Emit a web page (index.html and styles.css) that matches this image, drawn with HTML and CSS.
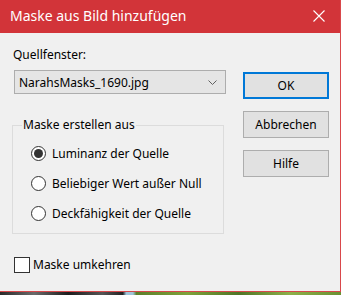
FILE: index.html
```html
<!DOCTYPE html>
<html lang="de">
<head>
    <meta charset="UTF-8">
    <title>Maske aus Bild hinzufügen</title>
    <link rel="stylesheet" href="styles.css">
</head>
<body>
    <div class="dialog">
        <div class="title-bar">
            <span class="title-text">Maske aus Bild hinzufügen</span>
            <svg class="close-icon" width="12" height="12" viewBox="0 0 12 12">
                <path d="M0.5 0.5 L11.5 11.5 M11.5 0.5 L0.5 11.5" stroke="#ffffff" stroke-width="1.1" fill="none"/>
            </svg>
        </div>

        <div class="dialog-body">
            <div class="main-column">
                <div class="field-label">Quellfenster:</div>
                <div class="combo">
                    <span class="combo-value">NarahsMasks_1690.jpg</span>
                    <svg class="combo-arrow" width="9" height="5" viewBox="0 0 9 5">
                        <path d="M0.5 0.5 L4.5 4.5 L8.5 0.5" stroke="#606060" stroke-width="1" fill="none"/>
                    </svg>
                </div>

                <fieldset class="group-box">
                    <legend class="group-title">Maske erstellen aus</legend>
                    <div class="radio-row">
                        <span class="radio checked"></span>
                        <span>Luminanz der Quelle</span>
                    </div>
                    <div class="radio-row">
                        <span class="radio"></span>
                        <span>Beliebiger Wert außer Null</span>
                    </div>
                    <div class="radio-row">
                        <span class="radio"></span>
                        <span>Deckfähigkeit der Quelle</span>
                    </div>
                </fieldset>

                <div class="check-row">
                    <span class="checkbox"></span>
                    <span>Maske umkehren</span>
                </div>
            </div>

            <div class="button-column">
                <div class="button default">OK</div>
                <div class="button">Abbrechen</div>
                <div class="button">Hilfe</div>
            </div>
        </div>
    </div>
    <div class="backdrop-strip"></div>
</body>
</html>
```

FILE: styles.css
```css
* {
    margin: 0;
    padding: 0;
    box-sizing: border-box;
}

body {
    width: 341px;
    height: 295px;
    overflow: hidden;
    font-family: 'Noto Sans', 'DejaVu Sans', sans-serif;
    font-size: 12px;
    color: #000000;
    background: #f0f0f0;
}

.dialog {
    height: 292px;
    background: #f0f0f0;
    border-right: 1px solid #d9474b;
    border-bottom: 1px solid #d9474b;
    display: flex;
    flex-direction: column;
}

.title-bar {
    height: 33px;
    background: #d23439;
    color: #ffffff;
    display: flex;
    align-items: center;
    justify-content: space-between;
    padding: 0 15px 2px 10px;
}

.title-text {
    font-size: 14px;
}

.close-icon {
    display: block;
}

.dialog-body {
    display: flex;
    gap: 17px;
}

.main-column {
    width: 226px;
    padding: 14px 0 0 13px;
}

.field-label {
    line-height: 16px;
    height: 16px;
    margin-bottom: 7px;
}

.combo {
    width: 212px;
    margin-left: 1px;
    height: 24px;
    background: #e5e5e5;
    border: 1px solid #adadad;
    display: flex;
    align-items: center;
    justify-content: space-between;
    padding: 0 8px 0 4px;
}

.combo-arrow {
    display: block;
}

.group-box {
    width: 212px;
    margin: 23px 0 0 -1px;
    border: 1px solid #dcdcdc;
    padding: 5px 0 5px 18px;
}

.group-title {
    padding: 0 1px;
    margin-left: -9px;
    line-height: 16px;
}

.radio-row {
    height: 30px;
    display: flex;
    align-items: center;
    gap: 6px;
}

.radio {
    width: 15px;
    height: 15px;
    border: 1px solid #333333;
    border-radius: 50%;
    background: #ffffff;
    position: relative;
}

.radio.checked::after {
    content: '';
    position: absolute;
    left: 2px;
    top: 2px;
    width: 9px;
    height: 9px;
    border-radius: 50%;
    background: #333333;
}

.check-row {
    margin: 22px 0 0 1px;
    display: flex;
    align-items: center;
    gap: 3px;
}

.checkbox {
    width: 16px;
    height: 16px;
    border: 1px solid #333333;
    background: #ffffff;
}

.button-column {
    width: 86px;
    padding-top: 39px;
    display: flex;
    flex-direction: column;
    gap: 12px;
}

.button {
    height: 27px;
    background: #e1e1e1;
    border: 1px solid #adadad;
    display: flex;
    align-items: center;
    justify-content: center;
}

.button.default {
    border: 2px solid #0078d7;
}

.backdrop-strip {
    height: 3px;
    background: linear-gradient(to right, #2a2a2a 0, #6a6a6a 10%, #1c1c1c 20%, #555555 30%, #222222 36%, #9fc4d8 37%, #9fc4d8 39%, #5c7f2a 40%, #7ea23a 55%, #4f7526 70%, #8db049 85%, #6a9132 100%);
}
```
